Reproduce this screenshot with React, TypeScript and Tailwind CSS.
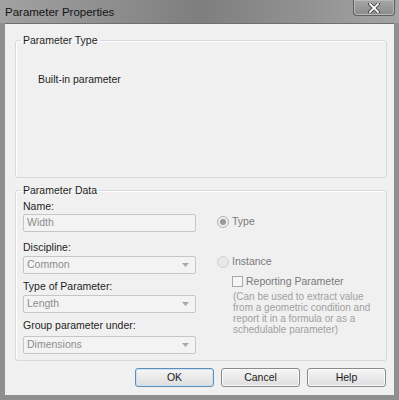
import React from "react";

const font = { fontFamily: '"Liberation Sans", Arial, sans-serif' };

const Arrow = () => (
  <svg width="7" height="4" viewBox="0 0 7 4" className="shrink-0">
    <path d="M0 0h7L3.5 4z" fill="#a8a8a8" />
  </svg>
);

const Field = ({ value, select }: { value: string; select?: boolean }) => (
  <div className="flex h-[18px] w-[173px] items-center justify-between rounded-[2px] border border-[#c6c6c6] bg-[#f3f3f3] pl-[3px] pr-[6px] text-[10.5px] text-[#8e8e8e]">
    <span>{value}</span>
    {select && <Arrow />}
  </div>
);

const Button = ({ label, primary }: { label: string; primary?: boolean }) => (
  <button
    className={
      "h-[19px] w-[79px] rounded-[3px] border bg-gradient-to-b from-[#f6f6f6] to-[#dddddd] text-[10.5px] text-[#1a1a1a] " +
      (primary ? "border-[#5f8db4] shadow-[inset_0_0_0_1px_#c9e2f5]" : "border-[#8a8a8a] shadow-[inset_0_0_0_1px_#fafafa]")
    }
  >
    {label}
  </button>
);

export default function App() {
  return (
    <div style={font} className="flex h-[400px] w-[399px] flex-col bg-[#8f8f8f]">
      {/* title bar */}
      <div className="flex h-[23px] items-start justify-between bg-gradient-to-r from-[#a2a2a2] via-[#7e7e7e] to-[#a4a4a4] pl-[5px] pr-[4px]">
        <span className="pt-[5px] text-[11.5px] leading-[14px] text-[#141414]">Parameter Properties</span>
        <div className="flex h-[16px] w-[42px] items-center justify-center rounded-b-[4px] border border-t-0 border-[#5e5e5e] bg-gradient-to-b from-[#a6a6a6] to-[#8a8a8a] shadow-[inset_0_0_0_1px_#b8b8b8]">
          <svg width="12" height="10" viewBox="0 0 12 10">
            <path d="M2 1l8 8M10 1L2 9" stroke="#3a3a3a" strokeWidth="3.4" strokeLinecap="square" />
            <path d="M2 1l8 8M10 1L2 9" stroke="#ffffff" strokeWidth="1.8" strokeLinecap="square" />
          </svg>
        </div>
      </div>

      {/* client area */}
      <div className="mx-[5px] mb-[5px] flex flex-1 flex-col border-t border-[#6f6f6f] bg-[#f0f0f0] text-[10px] text-[#1e1e1e]">
        <fieldset className="ml-[10px] mr-[7px] mt-[9px] h-[145px] rounded-[3px] border border-[#d5d9dc] shadow-[inset_1px_1px_0_#ffffff]">
          <legend className="ml-[5px] px-[2px] text-[10.5px] leading-[14px]">Parameter Type</legend>
          <div className="pl-[22px] pt-[25px] text-[10.5px]">Built-in parameter</div>
        </fieldset>

        <fieldset className="ml-[10px] mr-[7px] mt-[5px] h-[178px] rounded-[3px] border border-[#d5d9dc] shadow-[inset_1px_1px_0_#ffffff]">
          <legend className="ml-[5px] px-[2px] text-[10.5px] leading-[14px]">Parameter Data</legend>
          <div className="flex pl-[7px] text-[10.5px]">
            <div className="flex w-[173px] flex-col">
              <div className="mt-[2px] h-[15px] leading-[15px]">Name:</div>
              <Field value="Width" />
              <div className="mt-[8px] h-[15px] leading-[15px]">Discipline:</div>
              <div className="mt-[1px]">
                <Field value="Common" select />
              </div>
              <div className="mt-[5px] h-[15px] leading-[15px]">Type of Parameter:</div>
              <div className="mt-[1px]">
                <Field value="Length" select />
              </div>
              <div className="mt-[5px] h-[15px] leading-[15px]">Group parameter under:</div>
              <div className="mt-[3px]">
                <Field value="Dimensions" select />
              </div>
            </div>

            <div className="ml-[21px] flex flex-col pt-[18px]">
              <div className="flex h-[14px] items-center gap-[3px]">
                <span className="flex h-[12px] w-[12px] items-center justify-center rounded-full border border-[#b4b4b4] bg-[#ececec]">
                  <span className="h-[6px] w-[6px] rounded-full bg-[#9a9a9a]" />
                </span>
                <span className="text-[#7a7a7a]">Type</span>
              </div>
              <div className="mt-[26px] flex h-[14px] items-center gap-[3px]">
                <span className="h-[12px] w-[12px] rounded-full border border-[#d0d0d0] bg-[#e8e8e8]" />
                <span className="text-[#7a7a7a]">Instance</span>
              </div>
              <div className="ml-[15px] mt-[6px] flex h-[13px] items-center gap-[3px]">
                <span className="h-[11px] w-[11px] border border-[#a8a8a8] bg-[#f6f6f6]" />
                <span className="text-[#7a7a7a]">Reporting Parameter</span>
              </div>
              <div className="ml-[16px] mt-[3px] w-[140px] text-[10px] leading-[11px] text-[#a0a0a0]">
                (Can be used to extract value from a geometric condition and report it in a formula or as a schedulable parameter)
              </div>
            </div>
          </div>
        </fieldset>

        <div className="mr-[8px] mt-[7px] flex justify-end gap-[7px]">
          <Button label="OK" primary />
          <Button label="Cancel" />
          <Button label="Help" />
        </div>
      </div>
    </div>
  );
}
